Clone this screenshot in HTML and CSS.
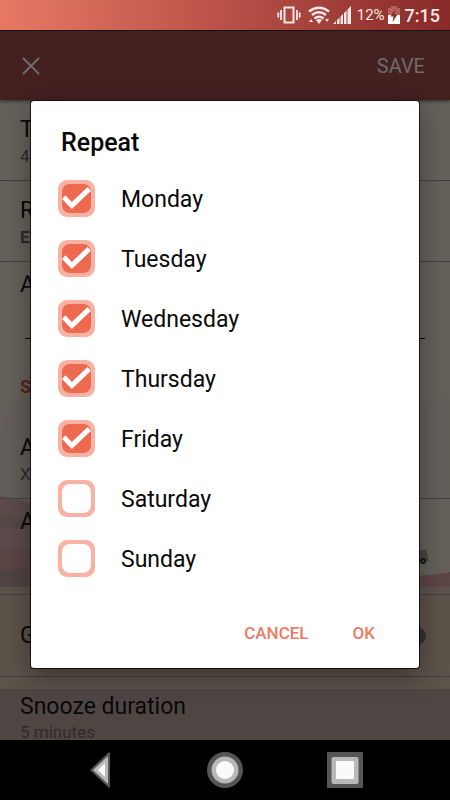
FILE: index.html
```html
<!DOCTYPE html>
<html lang="en">
    <head>
        <meta charset="UTF-8" />
        <meta name="viewport" content="width=device-width, initial-scale=1" />
        <title>Alarm</title>
        <link rel="stylesheet" href="styles.css">
    </head>
    <body>
        <div class="status">
            <svg width="24" height="20" viewBox="0 0 24 20" fill="none" stroke="#fbe9e7">
                <path stroke-width="2" d="M7.5 2.500h9v15h-9z" />
                <path stroke-width="1.8" d="M4 5v10M20 5v10M1.300 7.500v5M22.700 7.500v5" />
            </svg>
            <svg class="wifi" width="22" height="20" viewBox="0 0 22 20" fill="none" stroke="#fbe9e7">
                <path stroke-width="2.600" d="M1 6.500Q11-1 21 6.500M4 10Q11 4.500 18 10M6.500 13.500Q11 10 15.500 13.500" />
                <path fill="#fbe9e7" stroke="none" d="M8 15q3-2 6 0l-3 4zM1 17l2-3 2 3zM17 14h4l-2 3z" />
            </svg>
            <svg width="18" height="20" viewBox="0 0 18 20" fill="#fbe9e7">
                <path d="M0 19l3-3v3zM4 15l2.500-2.500V19H4zM7.500 11.500L10 9v10H7.500zM11 8l2.500-2.500V19H11zM14.500 4.500L18 1v18h-3.500z" />
            </svg>
            <span class="percent">12%</span>
            <svg width="12" height="20" viewBox="0 0 12 20">
                <path fill="#b5625e" d="M3 1h6v2h3v7H0V3h3z" />
                <path fill="#fff" d="M0 10h12v9H0z" />
                <path fill="#8c2c29" d="M7.500 4L2.500 11.500h3L4.500 17l5-7.500h-3z" />
            </svg>
            <span class="clock">7:15</span>
        </div>

        <main class="page">
            <svg class="scene" viewBox="0 0 450 640" preserveAspectRatio="none">
                <path fill="#625e58" d="M0 335Q10 300 31 290V400H0z" />
                <path fill="#63605a" d="M419 306q14-9 31-12V398h-31z" />
                <path fill="#5d4b4b" d="M0 396q20 3 45 10v81H0z" />
                <path fill="#544848" d="M0 414q18 6 45 9v9q-20-5-45-4z" />
                <path fill="#5b4545" d="M0 451q20-4 45-4v40H0z" />
                <path fill="#4f4343" d="M0 471q20-3 45-2v18H0z" />
                <path fill="#5d4645" d="M405 475q20 2 45-3v15h-45z" />
                <path fill="#5c534a" d="M0 487h450v102H0z" />
                <path fill="#4f4644" d="M0 589h450v51H0z" />
                <path fill="#464644" d="M415 450h11l3 11h-14z" />
                <circle cx="423" cy="461" r="3" fill="#161719" />
                <circle cx="423" cy="461" r="1" fill="#55544f" />
            </svg>
            <header class="toolbar">
                <button class="close" aria-label="Close">
                    <svg width="18" height="18" viewBox="0 0 18 18"><path fill="none" stroke="#6c6c6d" stroke-width="2" d="M1 1l16 16M17 1L1 17" /></svg>
                </button>
                <button class="save">SAVE</button>
            </header>
            <section class="row"><h3>T</h3><p>4</p></section>
            <section class="row"><h3>R</h3><p class="strong">E</p></section>
            <section class="name"><h3>A</h3></section>
            <h4>S</h4>
            <section class="row sound"><h3>A</h3><p>X</p></section>
            <section class="row effect"><h3>A</h3></section>
            <section class="row toggle"><h3>G</h3><span class="knob"></span></section>
            <section class="row last"><h3>Snooze duration</h3><p>5 minutes</p></section>
        </main>

        <nav class="nav">
            <button aria-label="Back">
                <svg width="38" height="38" viewBox="0 0 38 38">
                    <path fill="#555" d="M4 19L22.500 1.500H24v35h-1.500z" />
                    <path fill="#b9b9b9" d="M7 19L22 5v28z" />
                    <path fill="#fafafa" d="M12 19l7-7v14z" />
                </svg>
            </button>
            <button aria-label="Home">
                <svg width="38" height="38" viewBox="0 0 38 38">
                    <circle cx="19" cy="19" r="18" fill="#555" />
                    <circle cx="19" cy="19" r="13.500" fill="#b9b9b9" />
                    <circle cx="19" cy="19" r="9" fill="#fafafa" />
                </svg>
            </button>
            <button aria-label="Recent apps">
                <svg width="38" height="38" viewBox="0 0 38 38">
                    <rect x="1" y="1" width="36" height="36" rx="1" fill="#555" />
                    <rect x="5.500" y="6" width="27" height="27" rx="2" fill="#b9b9b9" />
                    <rect x="10" y="10" width="18" height="18" rx="1" fill="#fafafa" />
                </svg>
            </button>
        </nav>

        <div class="overlay">
            <form class="dialog" role="dialog" aria-labelledby="title">
                <h2 id="title">Repeat</h2>
                <label><input type="checkbox" checked />Monday</label>
                <label><input type="checkbox" checked />Tuesday</label>
                <label><input type="checkbox" checked />Wednesday</label>
                <label><input type="checkbox" checked />Thursday</label>
                <label><input type="checkbox" checked />Friday</label>
                <label><input type="checkbox" />Saturday</label>
                <label><input type="checkbox" />Sunday</label>
                <div class="actions">
                    <button type="button">CANCEL</button>
                    <button type="button">OK</button>
                </div>
            </form>
        </div>
    </body>
</html>
```
FILE: styles.css
```css
* {
    box-sizing: border-box;
}
body {
    margin: 0;
    height: 100vh;
    display: flex;
    flex-direction: column;
    position: relative;
    overflow: hidden;
    background: #000;
    color: #090909;
    font-family: Roboto, "Liberation Sans", sans-serif;
}
h2,
h3,
h4,
p {
    margin: 0;
}
button {
    padding: 0;
    border: none;
    background: none;
    font-family: inherit;
    cursor: pointer;
}
svg {
    display: block;
}

/* status bar */
.status {
    flex: none;
    height: 30px;
    display: flex;
    align-items: center;
    justify-content: flex-end;
    gap: 3px;
    padding-right: 10px;
    background: linear-gradient(90deg, #e77964, #b85148 50%, #872a28);
    color: #fbe9e7;
}
.wifi {
    margin-left: 4px;
}
.percent {
    margin-left: 3px;
    font-size: 15px;
}
.clock {
    margin-left: 2px;
    font-size: 18px;
    font-weight: 500;
}

/* alarm page behind the dialog */
.page {
    flex: 1;
    min-height: 0;
    display: flex;
    flex-direction: column;
    position: relative;
    overflow: hidden;
    border-top: 1px solid #14141c;
    background: #65615a;
}
.scene {
    position: absolute;
    top: 69px;
    left: 0;
    width: 100%;
    height: 640px;
}
.toolbar {
    flex: none;
    height: 69px;
    position: relative;
    display: flex;
    align-items: center;
    justify-content: space-between;
    padding: 0 25px 0 22px;
    background: #44201f;
    box-shadow: 0 1px 4px rgba(0, 0, 0, 0.6);
}
.save {
    color: #6c6c6d;
    font-size: 20px;
}
.row,
.name,
.page h4 {
    flex: none;
    position: relative;
}
.row {
    height: 81px;
    padding: 16px 20px 0;
    border-bottom: 1px solid #44403c;
}
.page h3 {
    font-size: 23px;
    line-height: 28px;
    font-weight: 400;
}
.page p {
    color: #2d2b2a;
    font-size: 17px;
    line-height: 24px;
}
.page .strong {
    font-weight: 700;
}
.name {
    height: 77px;
    margin: 0 25px;
    border-bottom: 1px solid #090909;
}
.name h3 {
    margin: 9px 0 0 -5px;
}
.page h4 {
    padding: 34px 20px 0;
    color: #5d1d1d;
    font-size: 18px;
    line-height: 28px;
}
.sound {
    height: 98px;
    padding-top: 33px;
}
.effect {
    height: 96px;
    padding-top: 9px;
}
.toggle {
    height: 82px;
    padding: 0 24px 0 20px;
    display: flex;
    align-items: center;
    justify-content: space-between;
}
.knob {
    width: 18px;
    height: 18px;
    border-radius: 50%;
    background: #37332f;
}
.last {
    height: auto;
    border: none;
}
.last p {
    line-height: 22px;
}

/* system navigation */
.nav {
    flex: none;
    height: 60px;
    display: flex;
    align-items: center;
    justify-content: center;
    gap: 82px;
}

/* dialog */
.overlay {
    position: absolute;
    inset: 29px 0 60px;
    display: flex;
    align-items: center;
    justify-content: center;
    padding: 0 31px;
}
.dialog {
    width: 100%;
    padding: 27px 27px 20px;
    border-radius: 3px;
    background: #fff;
    box-shadow: 0 0 0 1px rgba(0, 0, 0, 0.7), 0 8px 28px rgba(0, 0, 0, 0.4);
}
.dialog h2 {
    margin-bottom: 11px;
    padding-left: 3px;
    font-size: 25px;
    line-height: 30px;
    font-weight: 500;
}
.dialog label {
    height: 60px;
    display: flex;
    align-items: center;
    gap: 26px;
    font-size: 23px;
    cursor: pointer;
}
.dialog input {
    appearance: none;
    flex: none;
    width: 37px;
    height: 37px;
    margin: 0 0 2px;
    border-radius: 9px;
    background: #f9b1a3;
    display: grid;
    place-items: center;
}
.dialog input::before,
.dialog input::after {
    content: "";
    grid-area: 1 / 1;
    width: 29px;
    background: #fff;
}
.dialog input::before {
    height: 29px;
    border-radius: 8px;
}
.dialog input:checked::before {
    background: #ed6a50;
}
.dialog input:checked::after {
    height: 22px;
    clip-path: polygon(0 54%, 12% 38%, 34% 68%, 88% 0, 100% 17%, 34% 100%);
}
.actions {
    display: flex;
    justify-content: flex-end;
    gap: 44px;
    padding: 30px 17px 1px 0;
}
.actions button {
    color: #ee7b65;
    font-size: 17px;
    line-height: 28px;
    font-weight: 500;
}
```
